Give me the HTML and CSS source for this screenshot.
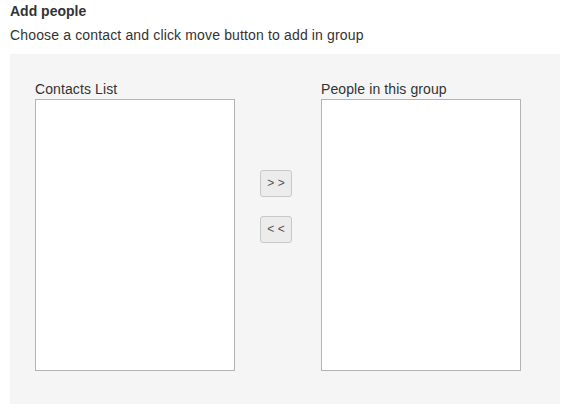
FILE: index.html
```html
<!DOCTYPE html>
<html>
<head>
<meta charset="utf-8">
<link rel="stylesheet" href="styles.css">
</head>
<body>
<div class="page">
  <h4 class="title">Add people</h4>
  <p class="hint">Choose a contact and click move button to add in group</p>
  <div class="panel">
    <div class="col">
      <label class="lbl">Contacts List</label>
      <div class="listbox"></div>
    </div>
    <div class="mid">
      <button class="mv">&gt; &gt;</button>
      <button class="mv">&lt; &lt;</button>
    </div>
    <div class="col">
      <label class="lbl">People in this group</label>
      <div class="listbox"></div>
    </div>
  </div>
</div>
</body>
</html>
```
FILE: styles.css
```css
html, body { margin: 0; padding: 0; background: #fff; }
body {
  font-family: "Liberation Sans", Arial, sans-serif;
  font-size: 14px;
  line-height: 20px;
  color: #333;
}
.page { padding: 1px 8px 0 10px; }
.title { margin: 0; font-size: 14px; font-weight: bold; line-height: 20px; }
.hint { margin: 4px 0 9px; letter-spacing: 0.15px; }
.panel {
  width: 500px;
  background: #f5f5f5;
  padding: 25px 25px 33px;
  display: grid;
  grid-template-columns: 200px 86px 200px;
  height: 292px;
}
.col { display: flex; flex-direction: column; }
.lbl { display: block; line-height: 20px; letter-spacing: 0.1px; }
.listbox {
  height: 270px;
  background: #fff;
  border: 1px solid #b4b4b4;
}
.mid {
  display: flex;
  flex-direction: column;
  align-items: flex-start;
  padding: 91px 0 0 25px;
  gap: 19px;
}
.mv {
  width: 32px;
  height: 27px;
  padding: 0;
  margin: 0;
  border: 1px solid #c8c8c8;
  border-radius: 3px;
  background: #ececec;
  color: #555;
  font-family: "Liberation Sans", Arial, sans-serif;
  font-size: 12px;
  line-height: 25px;
  text-align: center;
}
```
